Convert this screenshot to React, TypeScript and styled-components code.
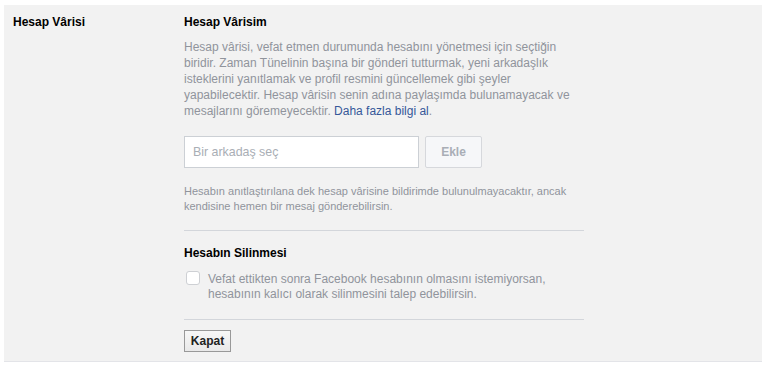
import React from "react";
import styled, { createGlobalStyle } from "styled-components";

const Global = createGlobalStyle`
  html, body { margin: 0; padding: 0; background: #fff; }
  body { font-family: "Liberation Sans", Arial, Helvetica, sans-serif; font-size: 12px; color: #1d2129; }
`;

const Panel = styled.div`
  margin: 5px 4px 0 4px;
  width: 758px;
  height: 357px;
  box-sizing: border-box;
  background: #f2f2f2;
  border-bottom: 1px solid #e3e4e8;
  display: grid;
  grid-template-columns: 180px 400px;
  padding-top: 9px;
`;

const SideLabel = styled.div`
  padding-left: 9px;
  font-weight: bold;
  font-size: 12px;
  line-height: 16px;
  color: #000;
`;

const Content = styled.div`
  display: flex;
  flex-direction: column;
`;

const Title = styled.div<{ $gap?: number }>`
  font-weight: bold;
  font-size: 12px;
  line-height: 16px;
  color: #000;
  margin-bottom: ${(p) => p.$gap ?? 9}px;
`;

const Paragraph = styled.p`
  margin: 0;
  font-size: 12px;
  line-height: 16px;
  color: #90949c;
`;

const Link = styled.a`
  color: #365899;
  text-decoration: none;
`;

const FormRow = styled.div`
  display: flex;
  gap: 6px;
  margin-top: 17px;
`;

const TextInput = styled.input`
  box-sizing: border-box;
  width: 235px;
  height: 32px;
  border: 1px solid #ccd0d5;
  background: #fff;
  padding: 0 8px;
  font-family: inherit;
  font-size: 12.4px;
  outline: none;
  &::placeholder { color: #a9aeb5; }
`;

const AddButton = styled.button`
  box-sizing: border-box;
  width: 57px;
  height: 32px;
  border: 1px solid #d6d8dc;
  border-radius: 2px;
  background: #f6f7f9;
  color: #a9aeb6;
  font-family: inherit;
  font-weight: bold;
  font-size: 12px;
  padding: 0;
`;

const Note = styled.p`
  margin: 16px 0 0 0;
  font-size: 11px;
  line-height: 15px;
  color: #90949c;
`;

const Divider = styled.hr<{ $top: number; $bottom: number }>`
  border: 0;
  border-top: 1px solid #d3d6db;
  margin: ${(p) => p.$top}px 0 ${(p) => p.$bottom}px 0;
  width: 400px;
`;

const CheckRow = styled.label`
  display: flex;
  align-items: flex-start;
  gap: 8px;
`;

const CheckBox = styled.span`
  box-sizing: border-box;
  width: 14px;
  height: 14px;
  margin: 0 0 0 2px;
  flex: none;
  border: 1px solid #ced0d4;
  border-radius: 3px;
  background: #fff;
`;

const CheckText = styled.span`
  font-size: 12px;
  line-height: 15px;
  color: #90949c;
  margin-top: 1px;
`;

const CloseButton = styled.button`
  align-self: flex-start;
  box-sizing: border-box;
  width: 47px;
  height: 22px;
  border: 1px solid #999;
  background: linear-gradient(#f7f7f7, #e9e9e9);
  color: #222;
  font-family: inherit;
  font-weight: bold;
  font-size: 12px;
  padding: 0;
`;

export default function App() {
  return (
    <>
      <Global />
      <Panel>
        <SideLabel>Hesap Vârisi</SideLabel>
        <Content>
          <Title>Hesap Vârisim</Title>
          <Paragraph>
            Hesap vârisi, vefat etmen durumunda hesabını yönetmesi için seçtiğin biridir. Zaman
            Tünelinin başına bir gönderi tutturmak, yeni arkadaşlık isteklerini yanıtlamak ve profil
            resmini güncellemek gibi şeyler yapabilecektir. Hesap vârisin senin adına paylaşımda
            bulunamayacak ve mesajlarını göremeyecektir. <Link href="#">Daha fazla bilgi al</Link>.
          </Paragraph>
          <FormRow>
            <TextInput placeholder="Bir arkadaş seç" />
            <AddButton disabled>Ekle</AddButton>
          </FormRow>
          <Note>
            Hesabın anıtlaştırılana dek hesap vârisine bildirimde bulunulmayacaktır, ancak kendisine
            hemen bir mesaj gönderebilirsin.
          </Note>
          <Divider $top={16} $bottom={14} />
          <Title $gap={10}>Hesabın Silinmesi</Title>
          <CheckRow>
            <CheckBox />
            <CheckText>
              Vefat ettikten sonra Facebook hesabının olmasını istemiyorsan, hesabının kalıcı olarak
              silinmesini talep edebilirsin.
            </CheckText>
          </CheckRow>
          <Divider $top={17} $bottom={10} />
          <CloseButton>Kapat</CloseButton>
        </Content>
      </Panel>
    </>
  );
}
